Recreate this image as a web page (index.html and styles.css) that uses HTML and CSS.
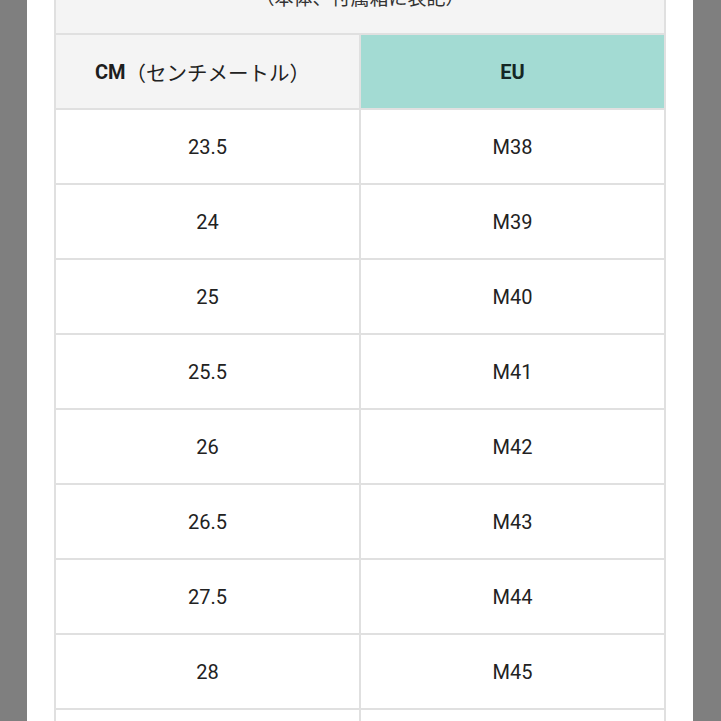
FILE: index.html
```html
<!DOCTYPE html>
<html lang="ja">
<head>
<meta charset="utf-8">
<title>サイズ表</title>
<link rel="stylesheet" href="styles.css">
</head>
<body>
<div class="panel">
  <div class="size-table">
    <div class="caption">（本体、付属箱に表記）</div>
    <div class="row head">
      <div class="cell head-cm"><b>CM</b><span class="jp">（センチメートル）</span></div>
      <div class="cell head-eu"><b>EU</b></div>
    </div>
    <div class="row"><div class="cell">23.5</div><div class="cell">M38</div></div>
    <div class="row"><div class="cell">24</div><div class="cell">M39</div></div>
    <div class="row"><div class="cell">25</div><div class="cell">M40</div></div>
    <div class="row"><div class="cell">25.5</div><div class="cell">M41</div></div>
    <div class="row"><div class="cell">26</div><div class="cell">M42</div></div>
    <div class="row"><div class="cell">26.5</div><div class="cell">M43</div></div>
    <div class="row"><div class="cell">27.5</div><div class="cell">M44</div></div>
    <div class="row"><div class="cell">28</div><div class="cell">M45</div></div>
    <div class="row"><div class="cell"></div><div class="cell"></div></div>
  </div>
</div>
</body>
</html>
```
FILE: styles.css
```css
html, body {
  margin: 0;
  padding: 0;
  background: #7f7f7f;
  height: 100%;
  overflow: hidden;
}
body {
  font-family: Roboto, "Noto Sans CJK JP", sans-serif;
  color: #222;
}
.panel {
  margin: 0 28px 0 27px;
  background: #fff;
  min-height: 100%;
  padding: 0 27px;
  overflow: hidden;
}
.size-table {
  margin-top: -40px;
  border-left: 2px solid #e0e0e0;
  border-right: 2px solid #e0e0e0;
}
.caption {
  height: 73px;
  border-bottom: 2px solid #e0e0e0;
  background: #f4f4f4;
  display: flex;
  align-items: center;
  justify-content: center;
  font-family: "Noto Sans CJK JP", sans-serif;
  font-size: 19px;
  color: #333;
}
.row {
  display: grid;
  grid-template-columns: 305px 1fr;
  height: 73px;
  border-bottom: 2px solid #e0e0e0;
}
.cell {
  display: flex;
  align-items: center;
  justify-content: center;
  font-size: 20px;
  color: #222;
}
.cell:first-child {
  border-right: 2px solid #e0e0e0;
}
.head-cm {
  background: #f4f4f4;
  padding-right: 10px;
}
.head-cm b {
  font-weight: 700;
  font-size: 20px;
  color: #1e1e1e;
}
.head-cm .jp {
  font-family: "Noto Sans CJK JP", sans-serif;
  font-size: 20.5px;
  color: #222;
}
.head-eu {
  background: #a3dbd3;
}
.head-eu b {
  font-weight: 700;
  color: #142724;
}
```
